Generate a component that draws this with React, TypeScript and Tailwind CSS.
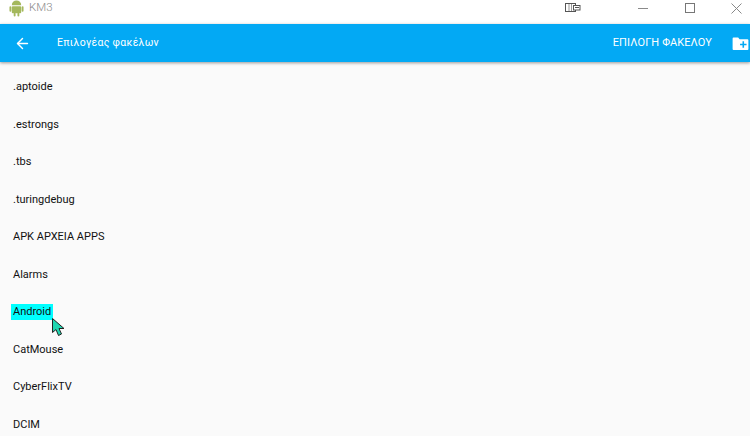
import { ArrowLeft } from "lucide-react";

const folders = [
  ".aptoide",
  ".estrongs",
  ".tbs",
  ".turingdebug",
  "APK ΑΡΧΕΙΑ APPS",
  "Alarms",
  "Android",
  "CatMouse",
  "CyberFlixTV",
  "DCIM",
];

function AndroidLogo() {
  return (
    <svg width="15" height="18" viewBox="0 0 16 18" fill="#a4b85c">
      <path d="M3 6a5 5 0 0 1 10 0z" />
      <rect x="3" y="7" width="10" height="7.5" rx="1" />
      <rect x="0.5" y="7" width="2" height="6" rx="1" />
      <rect x="13.5" y="7" width="2" height="6" rx="1" />
      <rect x="5" y="14" width="2" height="4" rx="1" />
      <rect x="9" y="14" width="2" height="4" rx="1" />
    </svg>
  );
}

function NewFolderIcon() {
  return (
    <svg width="17" height="13" viewBox="0 0 18 14">
      <path d="M1.500 0.500h5l1.500 2h8.500a1 1 0 0 1 1 1v9.500a1 1 0 0 1-1 1H1.500a1 1 0 0 1-1-1V1.500a1 1 0 0 1 1-1z" fill="#fff" />
      <path d="M12 4.500v7M8.500 8h7" stroke="#03a9f4" strokeWidth="1.700" />
    </svg>
  );
}

function WindowControls() {
  return (
    <div className="flex items-center">
      <svg width="16" height="10" viewBox="0 0 16 10" fill="none" stroke="#555" className="mr-[57px]">
        <rect x="0.500" y="0.500" width="10" height="8" />
        <path d="M4 1v7M6.500 1v7" stroke="#999" />
        <rect x="8.500" y="2.500" width="6.500" height="4.500" fill="#fff" />
        <path d="M10 4.500h4" />
      </svg>
      <div className="mr-[37px] h-px w-[10px] bg-[#8a8a8a]" />
      <div className="mr-[36px] h-[10px] w-[10px] border border-[#777]" />
      <svg width="11" height="11" viewBox="0 0 11 11" stroke="#888" className="mr-[6px]">
        <path d="M0.500 0.500l10 10M10.500 0.500l-10 10" />
      </svg>
    </div>
  );
}

export default function App() {
  return (
    <div className="flex h-[436px] w-[750px] flex-col overflow-hidden bg-[#fafafa] font-['Roboto',sans-serif]">
      <div className="flex h-6 shrink-0 items-center justify-between bg-white pr-[2px] pb-[8px]">
        <div className="flex items-center gap-[5px] pl-[9px]">
          <AndroidLogo />
          <span className="text-[11.500px] font-light text-[#8c8c8c]">KM3</span>
        </div>
        <WindowControls />
      </div>

      <div className="z-10 flex h-[38px] shrink-0 items-center bg-[#03a9f4] pr-[1px] text-white shadow-[0_1px_3px_rgba(0,0,0,0.4)]">
        <ArrowLeft size={17} strokeWidth={2} className="ml-[14px]" />
        <span className="ml-[26px] text-[10.500px] tracking-[0.3px]">Επιλογέας φακέλων</span>
        <span className="ml-auto text-[11px] tracking-[0.1px]">ΕΠΙΛΟΓΗ ΦΑΚΕΛΟΥ</span>
        <div className="ml-[20px] flex">
          <NewFolderIcon />
        </div>
      </div>

      <div className="flex flex-col items-start pl-[11px] pt-[6.500px]">
        {folders.map((name) => (
          <div key={name} className="flex h-[37.500px] shrink-0 items-center">
            <span
              className={
                name === "Android"
                  ? "bg-[#00ffff] px-[2px] py-px text-[11px] leading-[14px] text-[#111]"
                  : "px-[2px] py-px text-[11px] leading-[14px] text-[#111]"
              }
            >
              {name}
            </span>
            {name === "Android" && (
              <svg width="14" height="19" viewBox="0 0 14 19" className="absolute left-[52px] top-[318px]">
                <path d="M0.500 0.500v14l3.500-3 2.500 6 3-1.500-2.500-5.500h5z" fill="#1fd6b0" stroke="#222" />
              </svg>
            )}
          </div>
        ))}
      </div>
    </div>
  );
}
